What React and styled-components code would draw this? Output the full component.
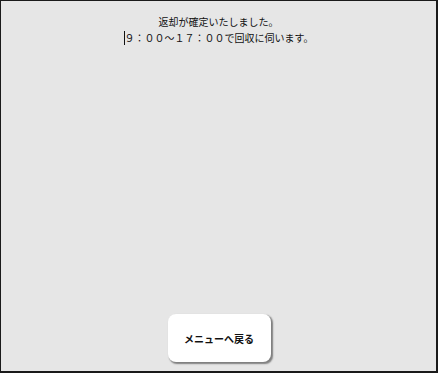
import styled, { createGlobalStyle } from "styled-components";

const Global = createGlobalStyle`
  html, body {
    margin: 0;
    padding: 0;
    background: #e6e6e6;
  }
  * {
    box-sizing: border-box;
  }
`;

const Screen = styled.div`
  width: 438px;
  height: 373px;
  background: #e6e6e6;
  border-style: solid;
  border-color: #1a1a1a;
  border-width: 1px 2px 2px 1px;
  display: flex;
  flex-direction: column;
  align-items: center;
  font-family: "Noto Sans CJK JP", "Noto Sans", sans-serif;
  color: #111;
`;

const Message = styled.div`
  margin-top: 13px;
  text-align: center;
  font-size: 10px;
  line-height: 16px;
`;

const Caret = styled.span`
  display: inline-block;
  width: 1px;
  height: 14px;
  background: #111;
  vertical-align: -3px;
`;

const Spacer = styled.div`
  flex: 1;
`;

const MenuButton = styled.button`
  width: 103px;
  height: 48px;
  margin: 0 0 9px 1px;
  border: none;
  border-radius: 8px;
  background: #fff;
  box-shadow: 1.5px 1.5px 1.5px rgba(0, 0, 0, 0.45);
  font-family: "Noto Sans CJK JP", "Noto Sans", sans-serif;
  font-weight: bold;
  font-size: 10px;
  color: #111;
  cursor: pointer;
`;

const App = () => {
  return (
    <>
      <Global />
      <Screen>
        <Message>
          <div>返却が確定いたしました。</div>
          <div>
            <Caret />
            ９：００～１７：００で回収に伺います。
          </div>
        </Message>
        <Spacer />
        <MenuButton>メニューへ戻る</MenuButton>
      </Screen>
    </>
  );
};

export default App;
